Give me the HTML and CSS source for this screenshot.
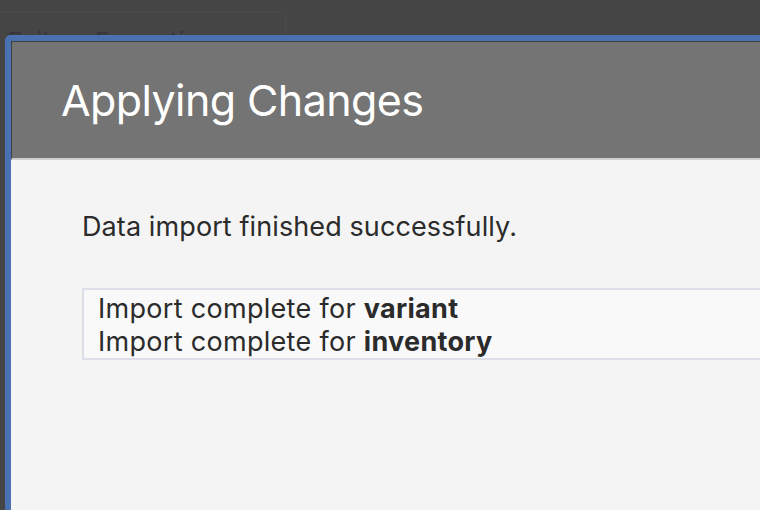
FILE: index.html
```html
<!DOCTYPE html>
<html>
<head>
<meta charset="utf-8">
<link rel="stylesheet" href="styles.css">
</head>
<body>
<div class="toolbar">
  <div class="field"><span class="field-text">Fail on Exception</span><span class="caret">▾</span></div>
</div>
<div class="modal">
  <div class="modal-header"><h1 class="modal-title">Applying Changes</h1></div>
  <div class="modal-body">
    <p class="message">Data import finished successfully.</p>
    <div class="log">
      <div class="log-line">Import complete for <b>variant</b></div>
      <div class="log-line">Import complete for <b>inventory</b></div>
    </div>
  </div>
</div>
</body>
</html>
```
FILE: styles.css
```css
html, body {
  margin: 0;
  padding: 0;
  width: 760px;
  height: 510px;
  overflow: hidden;
  background: #454546;
  font-family: Inter, "Noto Sans", sans-serif;
}
.toolbar {
  padding-top: 12px;
}
.field {
  width: 286px;
  height: 40px;
  border: 1px solid #4b4b4c;
  border-left: none;
  box-sizing: border-box;
  display: flex;
  align-items: flex-end;
  padding-left: 7px;
  color: #37373a;
  font-size: 26px;
  line-height: 1;
}
.field-text {
  flex: 1;
  transform: translateY(4px);
}
.caret {
  font-size: 18px;
  padding-right: 22px;
  transform: translateY(3px);
}
.modal {
  position: absolute;
  left: 5px;
  top: 35px;
  right: -40px;
  bottom: -40px;
  border-top: 6px solid #4a72b0;
  border-left: 6px solid #4a72b0;
  border-top-left-radius: 6px;
  background: #f4f4f4;
}
.modal-header {
  height: 119px;
  background: #747474;
  border-bottom: 2px solid #cfcfcf;
  border-top: 1px solid #3f3f40;
  border-left: 1px solid #3f3f40;
  box-sizing: border-box;
  display: flex;
  align-items: center;
  padding-left: 49px;
}
.modal-title {
  margin: 0;
  color: #ffffff;
  font-weight: 400;
  font-size: 43px;
  letter-spacing: -0.6px;
}
.modal-body {
  padding: 51px 0 0 71px;
  color: #2b2b2b;
}
.message {
  margin: 0;
  font-size: 27px;
  line-height: 32px;
  letter-spacing: 0.1px;
}
.log {
  margin-top: 45px;
  border: 2px solid #dcdfe8;
  border-right: none;
  background: #f9f9f9;
  padding: 2px 14px 0;
  font-size: 27px;
  line-height: 33px;
  letter-spacing: 0.3px;
}
.log b {
  font-weight: 700;
}
```
